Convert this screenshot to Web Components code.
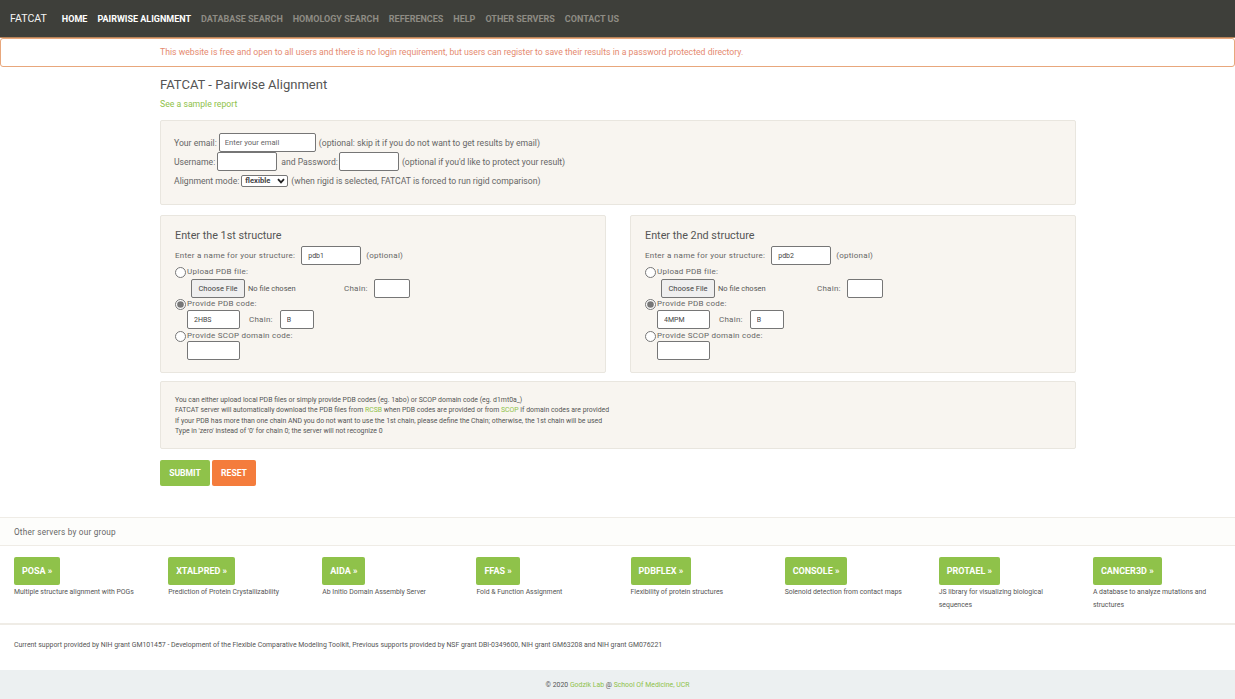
<!DOCTYPE html>
<html lang="en">
<head>
<meta charset="utf-8">
<title>FATCAT - Pairwise Alignment</title>
<style>
  html, body { margin: 0; padding: 0; background: #fff; }
  body { font-family: Roboto, "Liberation Sans", sans-serif; color: #555; }
</style>
</head>
<body>
<fc-nav></fc-nav>
<fc-alert>This website is free and open to all users and there is no login requirement, but users can register to save their results in a password protected directory.</fc-alert>
<fc-form></fc-form>
<fc-servers></fc-servers>
<fc-footer></fc-footer>

<script>
// shared look of the form fields, every shadow root that has fields gets it
const fieldCss = `
  input[type=text] {
    box-sizing: border-box; height: 19px; padding: 1px 6px;
    border: 1px solid #767676; border-radius: 2px; background: #fff;
    font: 7px Roboto, sans-serif; color: #444; outline: 0;
  }
  input::placeholder { color: #666; }
  input[type=radio] { width: 11px; height: 11px; margin: 2px 1px 0 0; accent-color: #777; }
  input[type=file] { font: 7.5px Roboto, sans-serif; color: #555; }
  input[type=file]::file-selector-button {
    height: 19px; width: 54px; padding: 0; margin-right: 3px; font: 7.5px Roboto, sans-serif; color: #444;
    background: #efefef; border: 1px solid #767676; border-radius: 2px;
  }
`;

class FcNav extends HTMLElement {
  constructor() {
    super();
    this.attachShadow({ mode: 'open' });
  }
  connectedCallback() {
    const links = [['HOME', 1], ['PAIRWISE ALIGNMENT', 1], ['DATABASE SEARCH'], ['HOMOLOGY SEARCH'],
      ['REFERENCES'], ['HELP'], ['OTHER SERVERS'], ['CONTACT US']];
    this.shadowRoot.innerHTML = `
      <style>
        :host { display: flex; align-items: center; box-sizing: border-box; height: 38px;
          padding: 0 0 0 10px; background: #3e3f3a; border-bottom: 1px solid #b5835a; }
        b { font: 400 10.6px Roboto, sans-serif; color: #f4f4f4; margin-right: 15px; }
        nav { display: flex; gap: 10px; }
        a { font: 700 9px Roboto, sans-serif; color: #8e8c84; text-decoration: none; }
        a.on { color: #fff; }
      </style>
      <b>FATCAT</b>
      <nav>${links.map(([t, on]) => `<a href="#" class="${on ? 'on' : ''}">${t}</a>`).join('')}</nav>`;
  }
}

class FcAlert extends HTMLElement {
  constructor() {
    super();
    this.attachShadow({ mode: 'open' });
    this.shadowRoot.innerHTML = `
      <style>
        :host { display: flex; align-items: center; box-sizing: border-box; height: 29px;
          padding: 0 0 1px 159px; border: 1px solid #e8a77c; border-radius: 3px;
          font: 8.68px Roboto, sans-serif; color: #e58a70; }
      </style>
      <slot></slot>`;
  }
}

// beige box used for every block of the form
class FcBox extends HTMLElement {
  constructor() {
    super();
    this.attachShadow({ mode: 'open' });
    this.shadowRoot.innerHTML = `
      <style>
        :host { display: block; box-sizing: border-box; background: #f8f5f0;
          border: 1px solid #e9e6df; border-radius: 2px; }
      </style>
      <slot></slot>`;
  }
}

class FcStructure extends HTMLElement {
  constructor() {
    super();
    this.attachShadow({ mode: 'open' });
  }
  connectedCallback() {
    const title = this.getAttribute('title');
    const name = this.getAttribute('name');
    const code = this.getAttribute('code');
    // the file field is a bit wider in the right hand box
    const fileW = this.getAttribute('file-width');
    this.shadowRoot.innerHTML = `
      <style>
        :host { display: block; }
        ${fieldCss}
        fc-box { height: 158px; padding: 13px 14px 0; font-size: 8px; color: #666; letter-spacing: .25px; }
        h3 { margin: 0 0 4px; font: 400 10.8px/13px Roboto, sans-serif; color: #555; letter-spacing: 0; }
        .row { display: flex; align-items: center; }
        .sub { padding-left: 12px; }
        .name input { width: 60px; margin: 0 5px 0 6px; }
        .radio { height: 12px; }
        .f { height: 19px; }
        .file-row { height: 18px; margin-top: 2px; }
        .code-row { margin-top: 1px; }
        .file { margin-left: 4px; width: ${fileW}px; }
        .file-chain { width: 36px; margin-left: 6px; }
        .chain { width: 34px; margin-left: 7px; }
        .code { width: 53px; }
        .gap { margin-left: 9px; }
      </style>
      <fc-box>
        <h3>${title}</h3>
        <div class="row name f">Enter a name for your structure: <input type="text" value="${name}"> (optional)</div>
        <label class="row radio"><input type="radio" name="${name}"> Upload PDB file:</label>
        <div class="row sub f file-row">
          <input class="file" type="file">
          <span>Chain:</span><input class="file-chain" type="text">
        </div>
        <label class="row radio"><input type="radio" name="${name}" checked> Provide PDB code:</label>
        <div class="row sub f code-row">
          <input class="code" type="text" value="${code}">
          <span class="gap">Chain:</span><input class="chain" type="text" value="B">
        </div>
        <label class="row radio"><input type="radio" name="${name}"> Provide SCOP domain code:</label>
        <div class="row sub f"><input class="code" type="text"></div>
      </fc-box>`;
  }
}

class FcForm extends HTMLElement {
  constructor() {
    super();
    this.attachShadow({ mode: 'open' });
    this.shadowRoot.innerHTML = `
      <style>
        :host { display: block; width: 916px; margin-left: 160px; color: #666; }
        ${fieldCss}
        h2 { margin: 0; padding-top: 10px; font: 400 13.05px/16px Roboto, sans-serif; color: #555; }
        .sample { display: block; margin: 5px 0 10px; font: 8.7px/12px Roboto, sans-serif; color: #8fc24a; text-decoration: none; }
        .opts { height: 85px; padding: 12px 13px 0; font-size: 8.65px; }
        .row { display: flex; align-items: center; gap: 2px; height: 19px; }
        input.email { width: 97px; margin-right: 1px; padding-left: 5px; font-size: 7.6px; }
        input.user { width: 60px; margin-right: 2px; }
        input.pass { width: 60px; margin: 0 1px 0 -1px; }
        /* native arrow eats too much of the 47px, so the chevron is drawn by hand */
        .pick { position: relative; display: block; width: 47px; height: 12px; margin-right: 1px; }
        select { appearance: none; box-sizing: border-box; width: 47px; height: 12px; margin: 0; padding: 0 0 0 3px;
          font: 700 7.6px Roboto, sans-serif; color: #444; background: #fff;
          border: 1px solid #767676; border-radius: 2px; }
        .pick svg { position: absolute; right: 3px; top: 3px; width: 8px; height: 6px; pointer-events: none; }
        .pair { display: grid; grid-template-columns: 446px 446px; gap: 24px; margin: 10px 0 8px; }
        .notes { height: 68px; padding: 13px 14px 0; font: 6.9px/10.4px Roboto, sans-serif; color: #555; }
        .notes a { color: #8fc24a; text-decoration: none; }
        .btns { display: flex; gap: 2px; margin-top: 11px; }
        button { height: 26px; border: 0; border-radius: 2px; color: #fff; padding: 0;
          font: 700 8.6px Roboto, sans-serif; }
        .ok { width: 50px; background: #8fc24a; }
        .no { width: 44px; background: #f47c3c; }
      </style>
      <h2>FATCAT - Pairwise Alignment</h2>
      <a class="sample" href="#">See a sample report</a>
      <fc-box class="opts">
        <div class="row">Your email: <input class="email" type="text" placeholder="Enter your email"> (optional: skip it if you do not want to get results by email)</div>
        <div class="row">Username: <input class="user" type="text"> and Password: <input class="pass" type="text"> (optional if you'd like to protect your result)</div>
        <div class="row">Alignment mode: <span class="pick"><select><option>flexible</option><option>rigid</option></select><svg viewBox="0 0 8 6"><path d="M1 1.2 4 4.4 7 1.2" fill="none" stroke="#222" stroke-width="1.8"/></svg></span> (when rigid is selected, FATCAT is forced to run rigid comparison)</div>
      </fc-box>
      <div class="pair">
        <fc-structure title="Enter the 1st structure" name="pdb1" code="2HBS" file-width="153"></fc-structure>
        <fc-structure title="Enter the 2nd structure" name="pdb2" code="4MPM" file-width="156"></fc-structure>
      </div>
      <fc-box class="notes">
        You can either upload local PDB files or simply provide PDB codes (eg. 1abo) or SCOP domain code (eg. d1mt0a_)<br>
        FATCAT server will automatically download the PDB files from <a href="#">RCSB</a> when PDB codes are provided or from <a href="#">SCOP</a> if domain codes are provided<br>
        If your PDB has more than one chain AND you do not want to use the 1st chain, please define the Chain; otherwise, the 1st chain will be used<br>
        Type in 'zero' instead of '0' for chain 0; the server will not recognize 0
      </fc-box>
      <div class="btns"><button class="ok">SUBMIT</button><button class="no">RESET</button></div>`;
  }
}

class FcServer extends HTMLElement {
  constructor() {
    super();
    this.attachShadow({ mode: 'open' });
  }
  connectedCallback() {
    const name = this.getAttribute('name');
    this.shadowRoot.innerHTML = `
      <style>
        :host { display: block; padding: 0 14px; font: 6.9px/13px Roboto, sans-serif; color: #555; }
        a { display: inline-block; padding: 0 8px; border-radius: 2px; background: #8fc24a;
          color: #fff; font: 700 9px/28px Roboto, sans-serif; text-decoration: none; }
        p { margin: 1px 0 0; }
      </style>
      <a href="#">${name} &raquo;</a>
      <p><slot></slot></p>`;
  }
}

class FcServers extends HTMLElement {
  constructor() {
    super();
    this.attachShadow({ mode: 'open' });
    this.shadowRoot.innerHTML = `
      <style>
        :host { display: block; margin-top: 31px; border: 1px solid #efece6; border-width: 1px 0 2px; }
        header { box-sizing: border-box; height: 28px; padding: 0 14px; display: flex; align-items: center;
          background: #fdfdfb; border-bottom: 1px solid #efece6; font: 8.2px Roboto, sans-serif; letter-spacing: .22px; color: #666; }
        .grid { box-sizing: border-box; display: grid; grid-template-columns: repeat(8, 1fr); height: 77px;
          padding: 11px 2px 0 0; }
      </style>
      <header>Other servers by our group</header>
      <div class="grid">
        <fc-server name="POSA">Multiple structure alignment with POGs</fc-server>
        <fc-server name="XTALPRED">Prediction of Protein Crystallizability</fc-server>
        <fc-server name="AIDA">Ab Initio Domain Assembly Server</fc-server>
        <fc-server name="FFAS">Fold &amp; Function Assignment</fc-server>
        <fc-server name="PDBFLEX">Flexibility of protein structures</fc-server>
        <fc-server name="CONSOLE">Solenoid detection from contact maps</fc-server>
        <fc-server name="PROTAEL">JS library for visualizing biological sequences</fc-server>
        <fc-server name="CANCER3D">A database to analyze mutations and structures</fc-server>
      </div>`;
  }
}

class FcFooter extends HTMLElement {
  constructor() {
    super();
    this.attachShadow({ mode: 'open' });
    this.shadowRoot.innerHTML = `
      <style>
        :host { display: block; font: 6.9px Roboto, sans-serif; color: #555; }
        .support { box-sizing: border-box; height: 45px; padding: 16px 14px 0; }
        .copy { height: 29px; background: #ecf0f1; display: flex; align-items: center; justify-content: center; }
        a { color: #8fc24a; text-decoration: none; }
        span { white-space: pre; }
      </style>
      <div class="support">Current support provided by NIH grant GM101457 - Development of the Flexible Comparative Modeling Toolkit, Previous supports provided by NSF grant DBI-0349600, NIH grant GM63208 and NIH grant GM076221</div>
      <div class="copy"><span>&copy; 2020 <a href="#">Godzik Lab</a> @ <a href="#">School Of Medicine, UCR</a></span></div>`;
  }
}

customElements.define('fc-nav', FcNav);
customElements.define('fc-alert', FcAlert);
customElements.define('fc-box', FcBox);
customElements.define('fc-structure', FcStructure);
customElements.define('fc-form', FcForm);
customElements.define('fc-server', FcServer);
customElements.define('fc-servers', FcServers);
customElements.define('fc-footer', FcFooter);
</script>
</body>
</html>
